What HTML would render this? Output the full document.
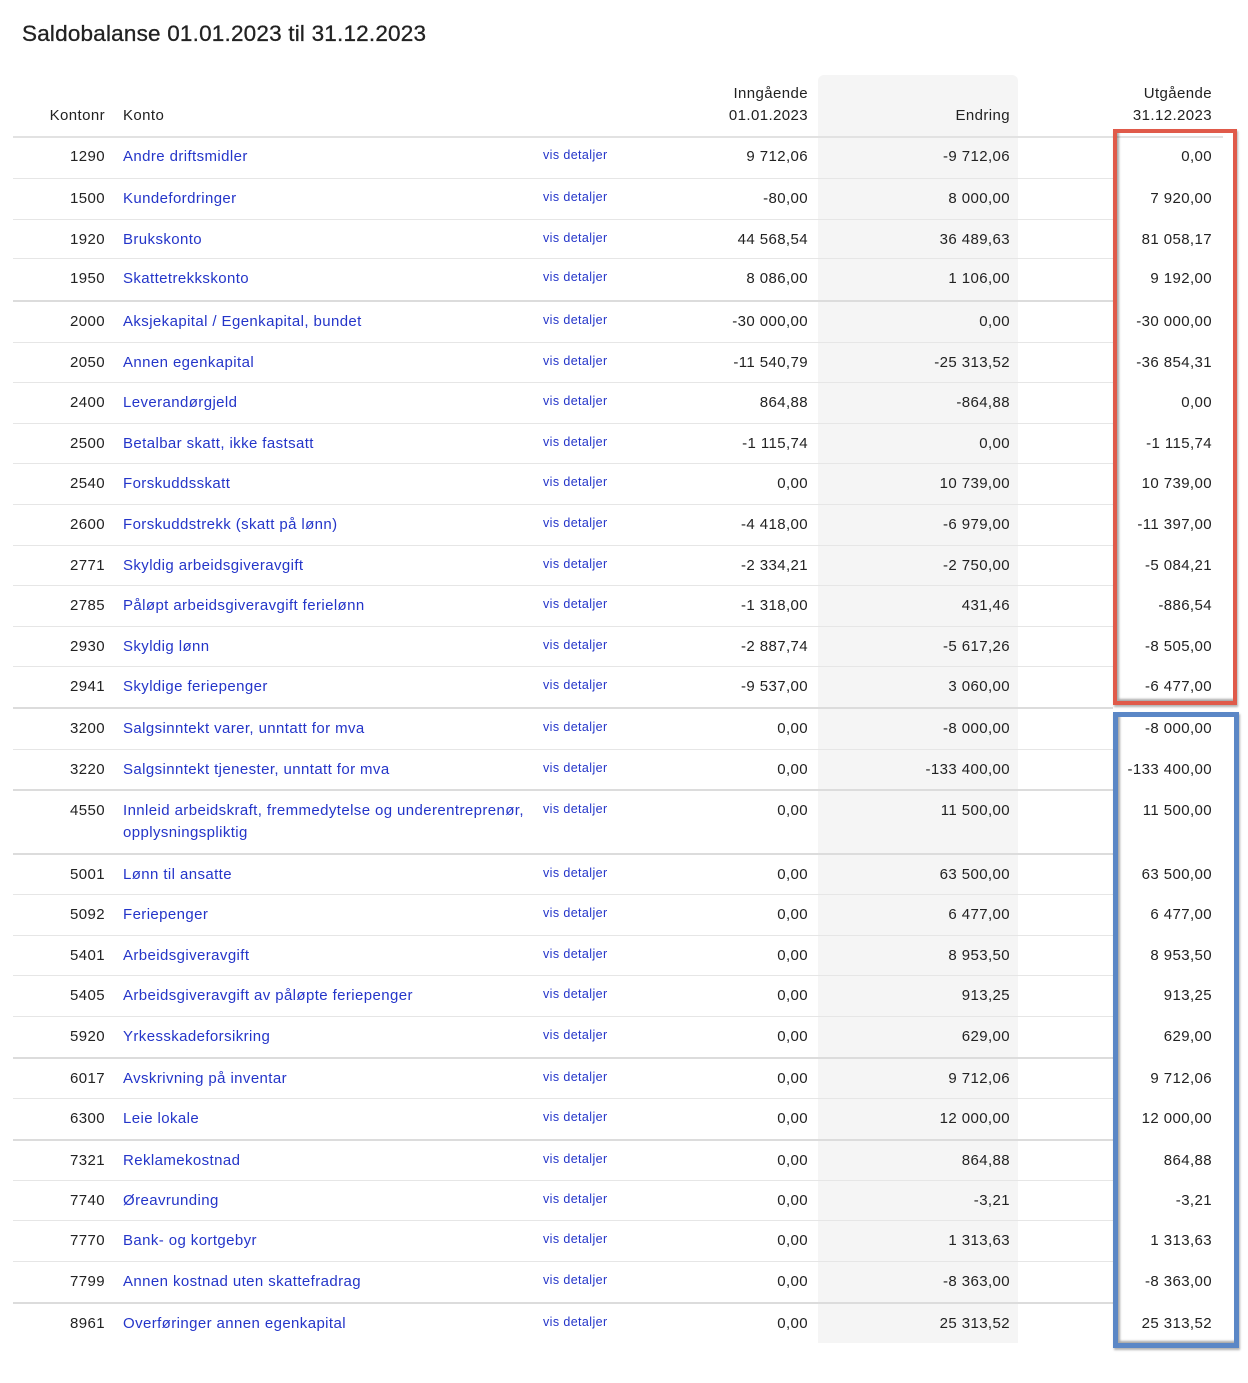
<!DOCTYPE html>
<html><head><meta charset="utf-8"><style>
body{margin:0;width:1248px;height:1383px;background:#fff;font-family:"Liberation Sans",sans-serif;color:#222;position:relative;overflow:hidden}
.t{position:absolute;left:22px;top:21px;font-size:22.5px;color:#222;letter-spacing:0.2px;-webkit-text-stroke:0.3px #222}
.g{position:absolute;left:818px;top:75px;width:200px;height:1268px;background:#f5f5f5;border-radius:6px 6px 0 0}
.h{position:absolute;font-size:15px;line-height:22px;text-align:right;letter-spacing:0.4px}
.r{position:absolute;left:13px;width:1100px;border-top:1px solid #e6e6e6;font-size:15px;letter-spacing:0.4px}
.r.b{border-top:2px solid #dcdcdc}
.r div{position:absolute;top:9px;line-height:22px}
.n{right:1008px;text-align:right}
.k{left:110px;color:#2435c9;width:420px}
.v{left:530px;top:7px!important;font-size:12.5px;color:#2435c9;letter-spacing:0.4px}
.a{right:305px}.e{right:103px}.u{left:1079px;width:120px;text-align:right}
.box{position:absolute;box-sizing:border-box;box-shadow:inset 2px -2px 2px rgba(0,0,0,.35),1px 2px 2px rgba(0,0,0,.3)}
</style></head><body>
<div class="t">Saldobalanse 01.01.2023 til 31.12.2023</div>
<div class="g"></div>
<div class="h" style="left:20px;width:85px;top:105px">Kontonr</div>
<div class="h" style="left:123px;top:105px;text-align:left">Konto</div>
<div class="h" style="left:690px;width:118px;top:83px">Inngående<br>01.01.2023</div>
<div class="h" style="left:900px;width:110px;top:105px">Endring</div>
<div class="h" style="left:1090px;width:122px;top:83px">Utgående<br>31.12.2023</div>
<div style="position:absolute;left:13px;top:136px;width:1210px;height:2px;background:#e2e2e2"></div>

<div class="r" style="top:137px;height:40px;border-top:none"><div class="n">1290</div><div class="k">Andre driftsmidler</div><div class="v">vis detaljer</div><div class="a">9 712,06</div><div class="e">-9 712,06</div><div class="u">0,00</div></div>
<div class="r" style="top:178px;height:40px"><div class="n">1500</div><div class="k">Kundefordringer</div><div class="v">vis detaljer</div><div class="a">-80,00</div><div class="e">8 000,00</div><div class="u">7 920,00</div></div>
<div class="r" style="top:219px;height:39px"><div class="n">1920</div><div class="k">Brukskonto</div><div class="v">vis detaljer</div><div class="a">44 568,54</div><div class="e">36 489,63</div><div class="u">81 058,17</div></div>
<div class="r" style="top:258px;height:40px"><div class="n">1950</div><div class="k">Skattetrekkskonto</div><div class="v">vis detaljer</div><div class="a">8 086,00</div><div class="e">1 106,00</div><div class="u">9 192,00</div></div>
<div class="r b" style="top:300px;height:40px"><div class="n">2000</div><div class="k">Aksjekapital / Egenkapital, bundet</div><div class="v">vis detaljer</div><div class="a">-30 000,00</div><div class="e">0,00</div><div class="u">-30 000,00</div></div>
<div class="r" style="top:342px;height:39px"><div class="n">2050</div><div class="k">Annen egenkapital</div><div class="v">vis detaljer</div><div class="a">-11 540,79</div><div class="e">-25 313,52</div><div class="u">-36 854,31</div></div>
<div class="r" style="top:382px;height:40px"><div class="n">2400</div><div class="k">Leverandørgjeld</div><div class="v">vis detaljer</div><div class="a">864,88</div><div class="e">-864,88</div><div class="u">0,00</div></div>
<div class="r" style="top:423px;height:39px"><div class="n">2500</div><div class="k">Betalbar skatt, ikke fastsatt</div><div class="v">vis detaljer</div><div class="a">-1 115,74</div><div class="e">0,00</div><div class="u">-1 115,74</div></div>
<div class="r" style="top:463px;height:40px"><div class="n">2540</div><div class="k">Forskuddsskatt</div><div class="v">vis detaljer</div><div class="a">0,00</div><div class="e">10 739,00</div><div class="u">10 739,00</div></div>
<div class="r" style="top:504px;height:40px"><div class="n">2600</div><div class="k">Forskuddstrekk (skatt på lønn)</div><div class="v">vis detaljer</div><div class="a">-4 418,00</div><div class="e">-6 979,00</div><div class="u">-11 397,00</div></div>
<div class="r" style="top:545px;height:39px"><div class="n">2771</div><div class="k">Skyldig arbeidsgiveravgift</div><div class="v">vis detaljer</div><div class="a">-2 334,21</div><div class="e">-2 750,00</div><div class="u">-5 084,21</div></div>
<div class="r" style="top:585px;height:40px"><div class="n">2785</div><div class="k">Påløpt arbeidsgiveravgift ferielønn</div><div class="v">vis detaljer</div><div class="a">-1 318,00</div><div class="e">431,46</div><div class="u">-886,54</div></div>
<div class="r" style="top:626px;height:39px"><div class="n">2930</div><div class="k">Skyldig lønn</div><div class="v">vis detaljer</div><div class="a">-2 887,74</div><div class="e">-5 617,26</div><div class="u">-8 505,00</div></div>
<div class="r" style="top:666px;height:40px"><div class="n">2941</div><div class="k">Skyldige feriepenger</div><div class="v">vis detaljer</div><div class="a">-9 537,00</div><div class="e">3 060,00</div><div class="u">-6 477,00</div></div>
<div class="r b" style="top:707px;height:40px"><div class="n">3200</div><div class="k">Salgsinntekt varer, unntatt for mva</div><div class="v">vis detaljer</div><div class="a">0,00</div><div class="e">-8 000,00</div><div class="u">-8 000,00</div></div>
<div class="r" style="top:749px;height:39px"><div class="n">3220</div><div class="k">Salgsinntekt tjenester, unntatt for mva</div><div class="v">vis detaljer</div><div class="a">0,00</div><div class="e">-133 400,00</div><div class="u">-133 400,00</div></div>
<div class="r b" style="top:789px;height:62px"><div class="n">4550</div><div class="k">Innleid arbeidskraft, fremmedytelse og underentreprenør, opplysningspliktig</div><div class="v">vis detaljer</div><div class="a">0,00</div><div class="e">11 500,00</div><div class="u">11 500,00</div></div>
<div class="r b" style="top:853px;height:40px"><div class="n">5001</div><div class="k">Lønn til ansatte</div><div class="v">vis detaljer</div><div class="a">0,00</div><div class="e">63 500,00</div><div class="u">63 500,00</div></div>
<div class="r" style="top:894px;height:40px"><div class="n">5092</div><div class="k">Feriepenger</div><div class="v">vis detaljer</div><div class="a">0,00</div><div class="e">6 477,00</div><div class="u">6 477,00</div></div>
<div class="r" style="top:935px;height:39px"><div class="n">5401</div><div class="k">Arbeidsgiveravgift</div><div class="v">vis detaljer</div><div class="a">0,00</div><div class="e">8 953,50</div><div class="u">8 953,50</div></div>
<div class="r" style="top:975px;height:40px"><div class="n">5405</div><div class="k">Arbeidsgiveravgift av påløpte feriepenger</div><div class="v">vis detaljer</div><div class="a">0,00</div><div class="e">913,25</div><div class="u">913,25</div></div>
<div class="r" style="top:1016px;height:40px"><div class="n">5920</div><div class="k">Yrkesskadeforsikring</div><div class="v">vis detaljer</div><div class="a">0,00</div><div class="e">629,00</div><div class="u">629,00</div></div>
<div class="r b" style="top:1057px;height:39px"><div class="n">6017</div><div class="k">Avskrivning på inventar</div><div class="v">vis detaljer</div><div class="a">0,00</div><div class="e">9 712,06</div><div class="u">9 712,06</div></div>
<div class="r" style="top:1098px;height:40px"><div class="n">6300</div><div class="k">Leie lokale</div><div class="v">vis detaljer</div><div class="a">0,00</div><div class="e">12 000,00</div><div class="u">12 000,00</div></div>
<div class="r b" style="top:1139px;height:39px"><div class="n">7321</div><div class="k">Reklamekostnad</div><div class="v">vis detaljer</div><div class="a">0,00</div><div class="e">864,88</div><div class="u">864,88</div></div>
<div class="r" style="top:1180px;height:39px"><div class="n">7740</div><div class="k">Øreavrunding</div><div class="v">vis detaljer</div><div class="a">0,00</div><div class="e">-3,21</div><div class="u">-3,21</div></div>
<div class="r" style="top:1220px;height:40px"><div class="n">7770</div><div class="k">Bank- og kortgebyr</div><div class="v">vis detaljer</div><div class="a">0,00</div><div class="e">1 313,63</div><div class="u">1 313,63</div></div>
<div class="r" style="top:1261px;height:40px"><div class="n">7799</div><div class="k">Annen kostnad uten skattefradrag</div><div class="v">vis detaljer</div><div class="a">0,00</div><div class="e">-8 363,00</div><div class="u">-8 363,00</div></div>
<div class="r b" style="top:1302px;height:40px"><div class="n">8961</div><div class="k">Overføringer annen egenkapital</div><div class="v">vis detaljer</div><div class="a">0,00</div><div class="e">25 313,52</div><div class="u">25 313,52</div></div>

<div class="box" style="left:1113px;top:129px;width:124px;height:576px;border:4px solid #e05a4a"></div>
<div class="box" style="left:1113px;top:712px;width:126px;height:636px;border:5px solid #5b87c6"></div>
</body></html>
